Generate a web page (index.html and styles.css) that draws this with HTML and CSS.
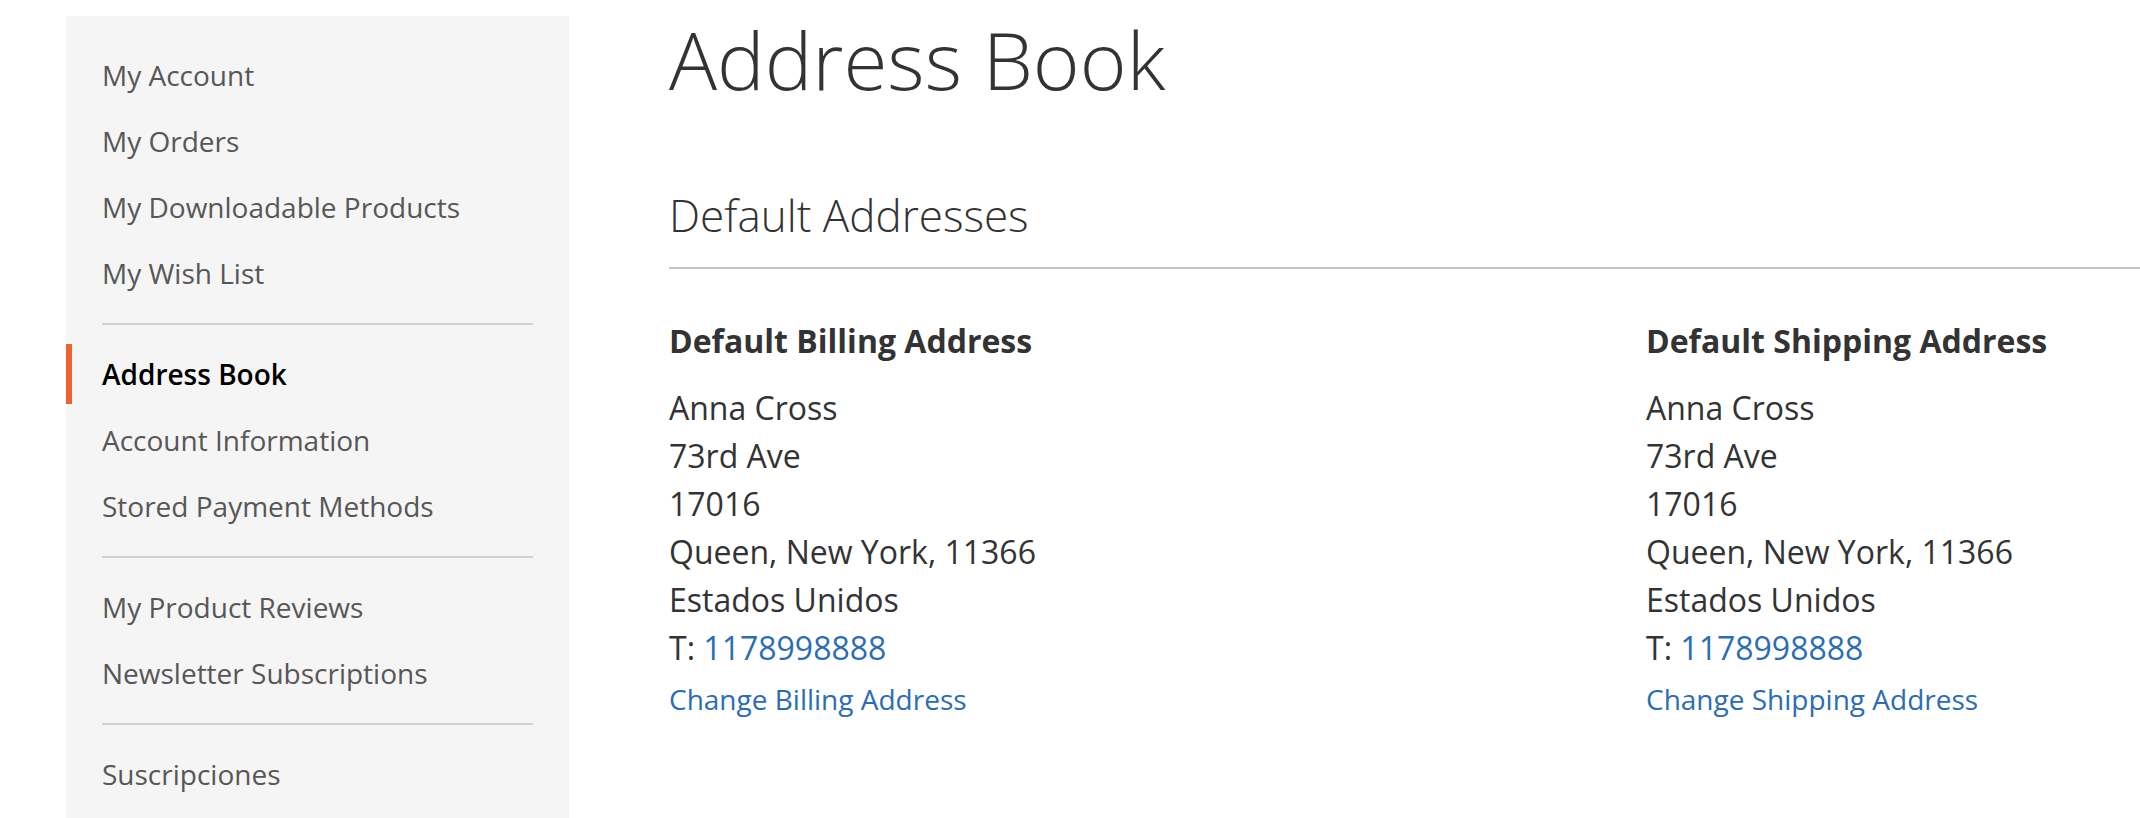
FILE: index.html
```html
<!DOCTYPE html>
<html lang="en">
<head>
<meta charset="utf-8">
<title>Address Book</title>
<link rel="stylesheet" href="styles.css">
</head>
<body>
<div class="page">
  <aside class="sidebar">
    <ul class="account-nav">
      <li class="item"><a href="#">My Account</a></li>
      <li class="item"><a href="#">My Orders</a></li>
      <li class="item"><a href="#">My Downloadable Products</a></li>
      <li class="item"><a href="#">My Wish List</a></li>
      <li class="delimiter"></li>
      <li class="item current"><strong>Address Book</strong></li>
      <li class="item"><a href="#">Account Information</a></li>
      <li class="item"><a href="#">Stored Payment Methods</a></li>
      <li class="delimiter"></li>
      <li class="item"><a href="#">My Product Reviews</a></li>
      <li class="item"><a href="#">Newsletter Subscriptions</a></li>
      <li class="delimiter"></li>
      <li class="item"><a href="#">Suscripciones</a></li>
    </ul>
  </aside>
  <main class="main">
    <h1 class="page-title">Address Book</h1>
    <section class="block-addresses">
      <h2 class="block-title">Default Addresses</h2>
      <div class="boxes">
        <div class="box">
          <h3 class="box-title">Default Billing Address</h3>
          <address class="box-content">
            Anna Cross<br>
            73rd Ave<br>
            17016<br>
            Queen, New York, 11366<br>
            Estados Unidos<br>
            T: <a href="#">1178998888</a>
          </address>
          <div class="box-actions"><a href="#">Change Billing Address</a></div>
        </div>
        <div class="box">
          <h3 class="box-title">Default Shipping Address</h3>
          <address class="box-content">
            Anna Cross<br>
            73rd Ave<br>
            17016<br>
            Queen, New York, 11366<br>
            Estados Unidos<br>
            T: <a href="#">1178998888</a>
          </address>
          <div class="box-actions"><a href="#">Change Shipping Address</a></div>
        </div>
      </div>
    </section>
  </main>
</div>
</body>
</html>
```

FILE: styles.css
```css
html, body {
  margin: 0;
  padding: 0;
  background: #ffffff;
}

body {
  font-family: "Open Sans", "Liberation Sans", sans-serif;
  color: #333333;
  overflow: hidden;
}

.page {
  display: flex;
  align-items: flex-start;
  padding-left: 66px;
  gap: 100px;
}

.sidebar {
  flex: 0 0 503px;
  width: 503px;
  margin-top: 16px;
  background: #f5f5f5;
  padding: 23px 0 30px;
  min-height: 900px;
  box-sizing: border-box;
}

.account-nav {
  list-style: none;
  margin: 0;
  padding: 0;
}

.account-nav .item {
  margin-top: 6px;
}

.account-nav .item a,
.account-nav .item strong {
  display: block;
  padding: 10px 36px 10px 30px;
  border-left: 6px solid transparent;
  font-size: 28px;
  line-height: 40px;
  color: #575757;
  text-decoration: none;
  font-weight: 400;
}

.account-nav .item.current strong {
  border-left-color: #eb6330;
  color: #000000;
  font-weight: 600;
}

.account-nav .delimiter {
  border-top: 2px solid #d1d1d1;
  margin: 20px 36px 19px 36px;
}

.main {
  flex: 1 1 auto;
  min-width: 0;
}

.page-title {
  margin: 9px 0 0;
  font-size: 80px;
  line-height: 100px;
  font-weight: 300;
  color: #333333;
}

.block-title {
  margin: 82px 0 0;
  font-size: 44px;
  line-height: 48px;
  font-weight: 300;
  color: #333333;
  padding-bottom: 28px;
  border-bottom: 2px solid #c6c6c6;
}

.boxes {
  display: grid;
  grid-template-columns: 977px 1fr;
  margin-top: 52px;
}

.box-title {
  margin: 0;
  font-size: 32px;
  line-height: 40px;
  font-weight: 700;
  color: #333333;
}

.box-content {
  margin-top: 23px;
  font-style: normal;
  font-size: 32px;
  line-height: 48px;
  color: #333333;
}

.box-content a,
.box-actions a {
  color: #2a6db5;
  text-decoration: none;
}

.box-actions {
  margin-top: 7px;
  font-size: 28px;
  line-height: 40px;
}
```
